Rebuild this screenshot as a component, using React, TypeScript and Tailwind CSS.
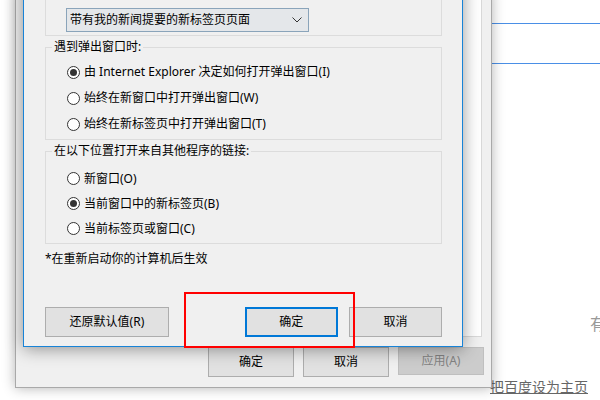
import React from 'react';

const font = { fontFamily: '"Noto Sans", "Noto Sans CJK SC", sans-serif' };

const Radio: React.FC<{ label: string; checked?: boolean; tall?: boolean }> = ({ label, checked, tall }) => (
  <div className={`flex items-center pl-[21px] ${tall ? 'h-[26px]' : 'h-[25px]'}`}>
    <span className="w-[13px] h-[13px] rounded-full border border-[#333] bg-white flex items-center justify-center shrink-0">
      {checked && <span className="w-[7px] h-[7px] rounded-full bg-[#333]" />}
    </span>
    <span className="ml-[4px] text-[12px] leading-[16px] text-black">{label}</span>
  </div>
);

const GroupBox: React.FC<{ title: string; className?: string; children: React.ReactNode }> = ({
  title,
  className,
  children,
}) => (
  <div className={`relative border border-[#dcdcdc] ${className ?? ''}`}>
    <span className="absolute -top-[9px] left-[6px] px-[2px] bg-[#f0f0f0] text-[12px] leading-[16px] text-black">
      {title}
    </span>
    {children}
  </div>
);

const Button: React.FC<{ label: string; primary?: boolean; className?: string }> = ({
  label,
  primary,
  className,
}) => (
  <button
    className={`h-[30px] bg-[#e1e1e1] text-[12px] leading-[16px] text-black flex items-center justify-center ${
      primary ? 'border-2 border-[#0078d7]' : 'border border-[#adadad]'
    } ${className ?? ''}`}
  >
    {label}
  </button>
);

export default function App() {
  return (
    <div className="relative w-[600px] h-[400px] bg-white overflow-hidden" style={font}>
      {/* page behind the dialogs */}
      <div className="absolute left-[480px] right-0 top-[23px] h-[41px] border-y border-[#4a8fe6]" />
      <div className="absolute left-[590px] top-[314px] text-[16px] leading-[20px] text-[#999]">有</div>
      <div className="absolute left-[490px] top-[378px] text-[14px] leading-[18px] text-[#666] underline">
        把百度设为主页
      </div>

      {/* Internet Options window */}
      <div className="absolute left-[15px] top-[-10px] w-[477px] h-[398px] bg-[#f0f0f0] border border-[#a9a9a9] shadow-[0_0_12px_rgba(0,0,0,0.3)] flex flex-col">
        <div className="flex-1 ml-[8px] mr-[9px] bg-white border border-[#d9d9d9]" />
        <div className="flex justify-end gap-[9px] mt-[10px] mb-[10px] mr-[7px]">
          <Button label="确定" className="w-[86px] h-[28px]" />
          <Button label="取消" className="w-[86px] h-[28px]" />
          <button className="w-[86px] h-[28px] bg-[#cccccc] border border-[#bfbfbf] text-[12px] leading-[16px] text-[#838383]">
            应用(A)
          </button>
        </div>
      </div>

      {/* Tab settings dialog */}
      <div className="absolute left-[23px] top-[-30px] w-[440px] h-[377px] bg-[#f0f0f0] border border-[#1883d7] shadow-[0_2px_16px_rgba(0,0,0,0.4)] flex flex-col pl-[21px] pr-[20px]">
        <div className="mt-[9px] h-[56px] border border-[#dcdcdc] pl-[20px] pt-[28px]">
          <div className="w-[243px] h-[24px] bg-[#e4e7ea] border border-[#8aa4ba] flex items-center justify-between pl-[3px] pr-[6px] -mt-[1px]">
            <span className="text-[12px] leading-[16px] text-black">带有我的新闻提要的新标签页页面</span>
            <svg width="10" height="6" viewBox="0 0 10 6" fill="none">
              <path d="M0.5 0.5 L5 5 L9.5 0.5" stroke="#333" strokeWidth="1" />
            </svg>
          </div>
        </div>

        <GroupBox title="遇到弹出窗口时:" className="mt-[11px] h-[93px] pt-[11px]">
          <Radio label="由 Internet Explorer 决定如何打开弹出窗口(I)" checked tall />
          <Radio label="始终在新窗口中打开弹出窗口(W)" tall />
          <Radio label="始终在新标签页中打开弹出窗口(T)" tall />
        </GroupBox>

        <GroupBox title="在以下位置打开来自其他程序的链接:" className="mt-[11px] h-[93px] pt-[14px]">
          <Radio label="新窗口(O)" />
          <Radio label="当前窗口中的新标签页(B)" checked />
          <Radio label="当前标签页或窗口(C)" />
        </GroupBox>

        <div className="mt-[7px] text-[12px] leading-[16px] text-black">*在重新启动你的计算机后生效</div>

        <div className="flex mt-[40px] items-center">
          <Button label="还原默认值(R)" className="w-[125px]" />
          <Button label="确定" primary className="w-[94px] ml-[76px]" />
          <Button label="取消" className="w-[94px] ml-[11px]" />
        </div>
      </div>

      {/* annotation */}
      <div className="absolute left-[184px] top-[292px] w-[171px] h-[56px] border-2 border-[#ff0000]" />
    </div>
  );
}
